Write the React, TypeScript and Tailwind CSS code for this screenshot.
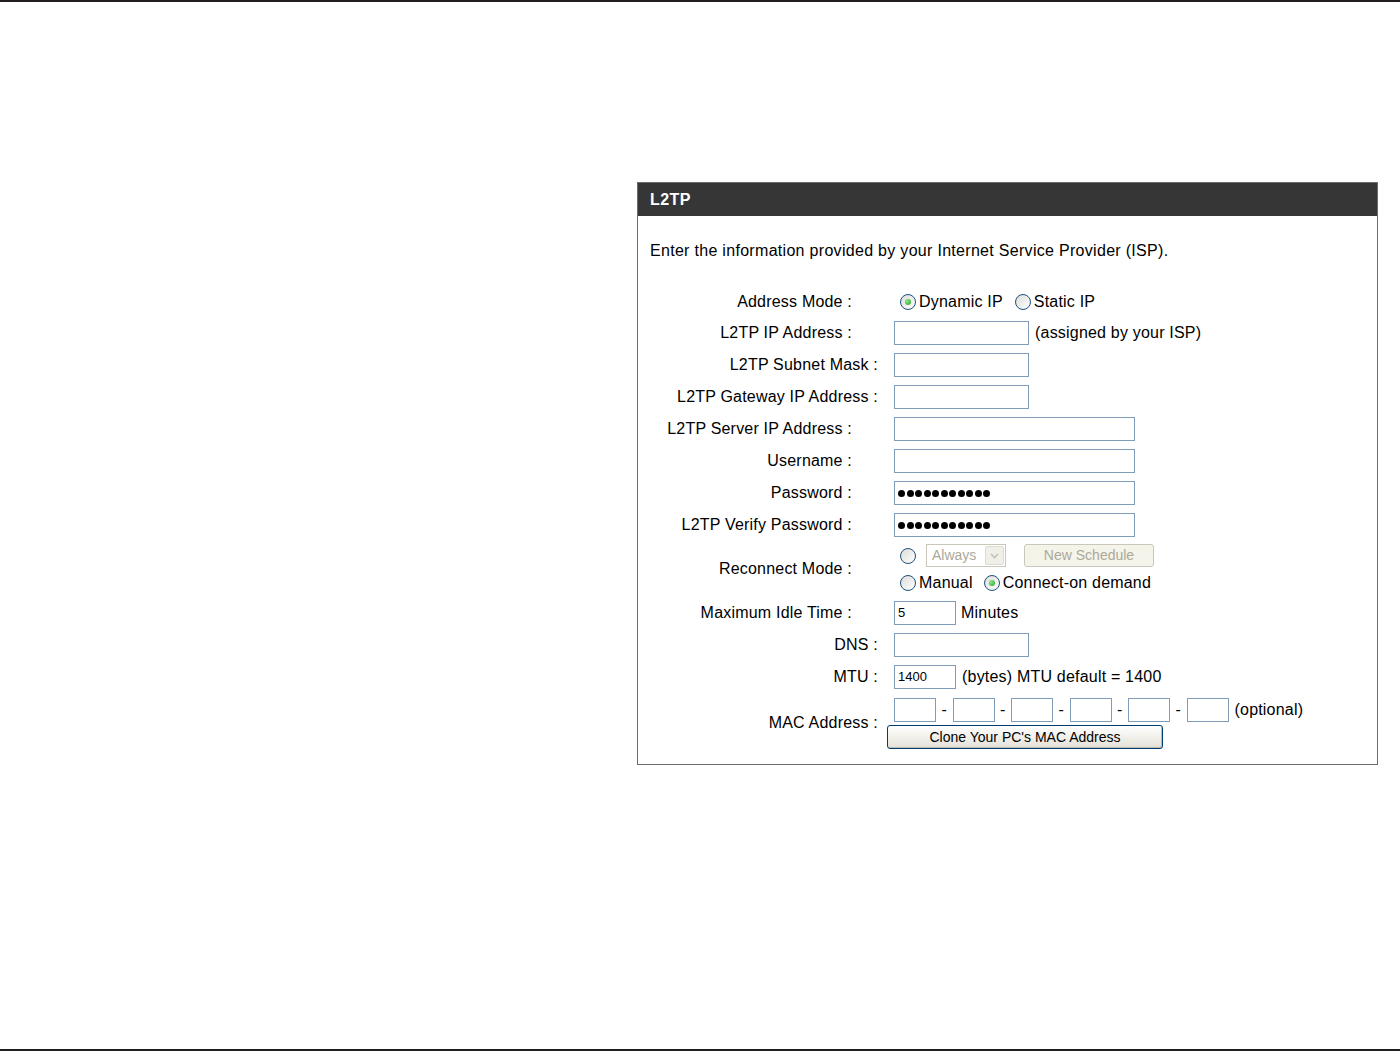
import React from "react";

const FONT = { fontFamily: '"Liberation Sans", Arial, sans-serif' };

function Radio({ checked = false, className = "" }: { checked?: boolean; className?: string }) {
  return (
    <span
      className={`flex h-[16px] w-[16px] shrink-0 items-center justify-center rounded-full border border-[#1c5180] bg-gradient-to-br from-[#dcdcd7] to-white ${className}`}
    >
      {checked && (
        <span className="block h-[6px] w-[6px] rounded-full bg-[radial-gradient(circle_at_35%_35%,#8ee68e,#21a121)]" />
      )}
    </span>
  );
}

function TextBox({ w, value, dots }: { w: string; value?: string; dots?: number }) {
  return (
    <div
      className={`flex h-[24px] items-center border border-[#7f9db9] bg-white px-[3px] text-[13px] tracking-normal text-black ${w}`}
    >
      {dots ? (
        <div className="flex gap-[1.5px]">
          {Array.from({ length: dots }).map((_, i) => (
            <span key={i} className="h-[7px] w-[7px] rounded-full bg-black" />
          ))}
        </div>
      ) : (
        value
      )}
    </div>
  );
}

function Row({
  label,
  wide,
  children,
  className = "h-[32px]",
}: {
  label: string;
  wide?: boolean;
  children: React.ReactNode;
  className?: string;
}) {
  return (
    <div className={`flex items-center ${className}`}>
      <div className={`w-[240px] shrink-0 text-right ${wide ? "" : "pr-[26px]"}`}>{label}</div>
      <div className="ml-[16px] flex flex-col">{children}</div>
    </div>
  );
}

export default function App() {
  return (
    <div
      className="flex h-[1051px] w-[1400px] flex-col border-t-2 border-[#231f20] bg-white text-[16px] tracking-[0.2px] text-black"
      style={FONT}
    >
      <div className="ml-[637px] mt-[180px] h-[583px] w-[741px] border border-[#6b6b6b]">
        {/* header */}
        <div className="flex h-[33px] items-center bg-[#363636] px-[12px] text-[16px] font-bold tracking-wide text-white">
          L2TP
        </div>

        <p className="mt-[25px] h-[20px] px-[12px] leading-[20px] tracking-[0.3px]">
          Enter the information provided by your Internet Service Provider (ISP).
        </p>

        <div className="mt-[25px]">
          <Row label="Address Mode :" className="h-[31px]">
            <div className="flex items-center">
              <Radio checked className="ml-[6px]" />
              <span className="ml-[3px]">Dynamic IP</span>
              <Radio className="ml-[12px]" />
              <span className="ml-[3px]">Static IP</span>
            </div>
          </Row>
          <Row label="L2TP IP Address :">
            <div className="flex items-center">
              <TextBox w="w-[135px]" />
              <span className="ml-[6px]">(assigned by your ISP)</span>
            </div>
          </Row>
          <Row label="L2TP Subnet Mask :" wide>
            <TextBox w="w-[135px]" />
          </Row>
          <Row label="L2TP Gateway IP Address :" wide>
            <TextBox w="w-[135px]" />
          </Row>
          <Row label="L2TP Server IP Address :">
            <TextBox w="w-[241px]" />
          </Row>
          <Row label="Username :">
            <TextBox w="w-[241px]" />
          </Row>
          <Row label="Password :">
            <TextBox w="w-[241px]" dots={11} />
          </Row>
          <Row label="L2TP Verify Password :">
            <TextBox w="w-[241px]" dots={11} />
          </Row>

          {/* reconnect mode */}
          <Row label="Reconnect Mode :" className="h-[56px]">
            <div className="flex h-[27px] items-center">
              <Radio className="ml-[6px]" />
              <div className="ml-[10px] flex h-[23px] w-[80px] items-center justify-between border border-[#c9c7ba] bg-white pl-[5px] pr-[1px] text-[14px] tracking-normal text-[#aca899]">
                Always
                <span className="flex h-[19px] w-[19px] items-center justify-center rounded-[2px] border border-[#dcdcd7] bg-[#f0efe8]">
                  <svg width="9" height="6" viewBox="0 0 9 6">
                    <path d="M1 1 L4.5 4.5 L8 1" fill="none" stroke="#c2c2bc" strokeWidth="1.6" />
                  </svg>
                </span>
              </div>
              <div className="ml-[18px] flex h-[23px] w-[130px] items-center justify-center rounded-[3px] border border-[#c9c7ba] bg-[#f5f4ea] text-[14px] tracking-normal text-[#aca899]">
                New Schedule
              </div>
            </div>
            <div className="flex h-[27px] items-center">
              <Radio className="ml-[6px]" />
              <span className="ml-[3px]">Manual</span>
              <Radio checked className="ml-[11px]" />
              <span className="ml-[3px]">Connect-on demand</span>
            </div>
          </Row>

          <Row label="Maximum Idle Time :">
            <div className="flex items-center">
              <TextBox w="w-[62px]" value="5" />
              <span className="ml-[5px]">Minutes</span>
            </div>
          </Row>
          <Row label="DNS :" wide>
            <TextBox w="w-[135px]" />
          </Row>
          <Row label="MTU :" wide>
            <div className="flex items-center">
              <TextBox w="w-[62px]" value="1400" />
              <span className="ml-[6px]">(bytes) MTU default = 1400</span>
            </div>
          </Row>

          {/* mac address */}
          <Row label="MAC Address :" wide className="h-[60px]">
            <div className="flex h-[28px] items-center">
              {[0, 1, 2, 3, 4, 5].map((i) => (
                <React.Fragment key={i}>
                  {i > 0 && <span className="w-[16.5px] text-center">-</span>}
                  <TextBox w="w-[42px]" />
                </React.Fragment>
              ))}
              <span className="ml-[6px]">(optional)</span>
            </div>
            <div className="-ml-[7px] flex h-[26px] items-center">
              <button
                type="button"
                className="flex h-[24px] w-[276px] items-center justify-center rounded-[3px] border border-[#003c74] bg-gradient-to-b from-white to-[#e3e1d6] text-[14px] tracking-normal text-black shadow-[inset_-1px_-1px_0_#c0bdb0]"
              >
                Clone Your PC's MAC Address
              </button>
            </div>
          </Row>
        </div>
      </div>

      <div className="flex-1" />
      <div className="h-[2px] bg-[#231f20]" />
    </div>
  );
}
